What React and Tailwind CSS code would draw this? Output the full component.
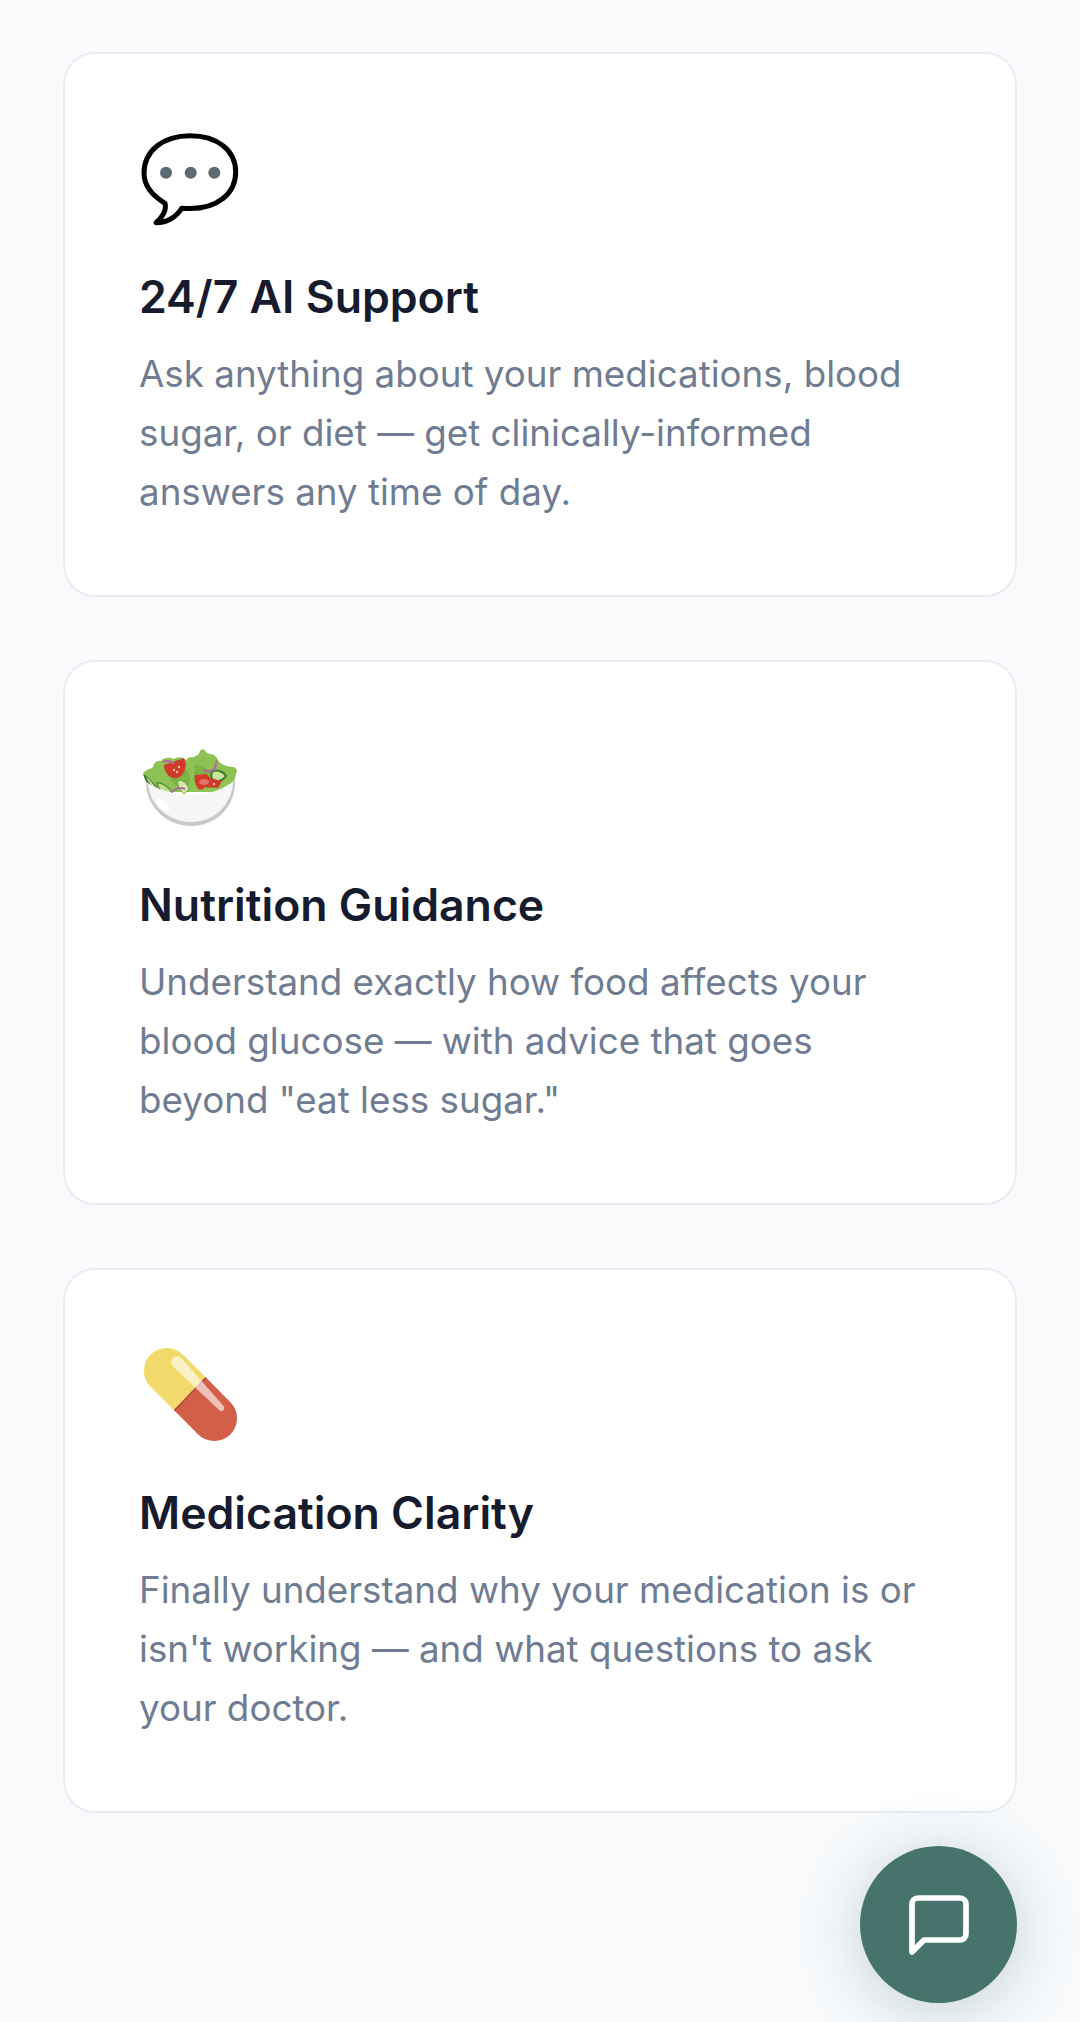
const ChatEmoji = () => (
  <svg width="104" height="104" viewBox="0 0 104 104" className="block">
    <path d="M51 7.7C25 7.7 5 22 5 45.3 5 58 14 68 26 75.3 28 82 23 90 17 94.7 28 94.5 37 89 42.7 80.3 45 80.5 48 80.5 51 80.5 78 80.5 96.7 66 96.7 44 96.7 22 78 7.7 51 7.7Z" fill="#fff" stroke="#000" strokeWidth="5" strokeLinejoin="round" />
    <circle cx="27" cy="44.7" r="6" fill="#5f6b73" />
    <circle cx="51.7" cy="44.7" r="6" fill="#5f6b73" />
    <circle cx="75.3" cy="44.7" r="6" fill="#5f6b73" />
  </svg>
);

const SaladEmoji = () => (
  <svg width="104" height="104" viewBox="0 0 104 104" className="block">
    <path d="M4 37C8 33 12 33 14 31 15 26 19 24 22 25 25 21 31 21 35 23 39 20 44 21 47 24 50 20 53 22 55 21 58 19 60 19 61 15 63 12 66 13 67 16 70 19 73 17 76 20 79 22 79 26 83 28 87 30 90 31 94 31 96 31 98 33 98 35L92 56H14Z" fill="#8fc255" />
    <path d="M30 30C36 28 46 30 50 38 54 46 50 52 44 52 36 52 28 42 30 30ZM56 28C64 30 74 34 74 44 70 52 60 50 54 44Z" fill="#7cb347" />
    <path d="M4 38C10 41 16 48 21 56L15 58C10 52 6 45 4 38Z" fill="#3f7d2e" />
    <path d="M7 41C11 44 15 49 18 54 13 50 9 46 7 41Z" fill="#cfe3a1" />
    <path d="M18 47C23 46 30 51 34 58L26 59C22 56 19 52 18 47Z" fill="#c3dd95" stroke="#4f8f33" strokeWidth="1.5" />
    <path d="M39 45C43 43 48 47 50 53L45 58C41 54 38 50 39 45Z" fill="#d6e8ae" stroke="#6ea83e" strokeWidth="1" />
    <path d="M73 36C77 33 84 35 87 40 84 45 78 46 74 44 72 42 72 38 73 36Z" fill="#cfe3a1" stroke="#3f7d2e" strokeWidth="2" />
    <path d="M25 29L45 22C48 28 47 35 42 40 37 44 31 42 28 38 26 35 25 32 25 29Z" fill="#cf3a2b" />
    <path d="M56 39L68 38C69 42 75 43 83 45L79 52C74 51 70 52 66 51 63 55 59 54 58 51 56 47 55 43 56 39Z" fill="#cf3a2b" />
    <circle cx="35" cy="34" r="1.2" fill="#f2c9a0" />
    <circle cx="40" cy="31" r="1.2" fill="#f2c9a0" />
    <circle cx="38" cy="36" r="1.2" fill="#f2c9a0" />
    <ellipse cx="65" cy="46" rx="5" ry="3" fill="#e57368" />
    <circle cx="75" cy="48" r="1.2" fill="#f2c9a0" />
    <path d="M24 26C28 24 32 25 35 28" stroke="#b06a9c" strokeWidth="2" fill="none" />
    <path d="M33 56C36 52 42 51 46 53" stroke="#b06a9c" strokeWidth="2" fill="none" />
    <path d="M64 34C71 38 78 33 77 25" stroke="#b06a9c" strokeWidth="2.2" fill="none" />
    <path d="M7 46C20 54 36 59 52 59 68 59 84 54 96 44 97 70 78 89 52 89 27 89 7 70 7 46Z" fill="#f6f6f6" />
    <path d="M7 46C7 70 27 90 52 90 78 90 97 70 96 44L94 46C93 68 76 86 52 86 29 86 10 68 9 47Z" fill="#c9c9c9" />
    <ellipse cx="24" cy="69" rx="8" ry="4" transform="rotate(35 24 69)" fill="#fff" />
  </svg>
);

const PillEmoji = () => (
  <svg width="104" height="104" viewBox="0 0 104 104" className="block">
    <path d="M11.6 10.6A22.7 22.7 0 0 1 43.8 10.6L67 33.4 35.4 66.4 11.6 42.8A22.7 22.7 0 0 1 11.6 10.6Z" fill="#f2d96b" />
    <path d="M67 33.4L91.4 58.2A22.7 22.7 0 0 1 59.2 90.4L35.4 66.4Z" fill="#d35f49" />
    <path d="M67 33.4L35.4 66.4" stroke="#a9473a" strokeWidth="1.5" />
    <path d="M41.9 13.5L84.8 62.2A3 3 0 0 1 80.6 66.4L33.5 21.9A6 6 0 0 1 41.9 13.5Z" fill="#fff" fillOpacity="0.62" />
  </svg>
);

const cards = [
  { icon: <ChatEmoji />, title: "24/7 AI Support", lines: ["Ask anything about your medications, blood", "sugar, or diet — get clinically-informed", "answers any time of day."] },
  { icon: <SaladEmoji />, title: "Nutrition Guidance", lines: ["Understand exactly how food affects your", "blood glucose — with advice that goes", "beyond \"eat less sugar.\""] },
  { icon: <PillEmoji />, title: "Medication Clarity", lines: ["Finally understand why your medication is or", "isn't working — and what questions to ask", "your doctor."] },
];

export default function App() {
  return (
    <div className="relative h-[2022px] overflow-hidden bg-[#f8fafc] px-[63px] pt-[52px] font-['Inter',sans-serif]">
      <div className="flex flex-col gap-[63px]">
        {cards.map((c) => (
          <div key={c.title} className="h-[545px] rounded-[32px] border-2 border-[#e8ebf2] bg-white px-[74px] pt-[74px]">
            <div className="h-[104px]">{c.icon}</div>
            <h3 className="mt-[36px] text-[44.6px] leading-[58px] font-semibold text-[#161b2e]">{c.title}</h3>
            <p className="mt-[19px] text-[36.75px] leading-[58.8px] text-[#6f7c91]">
              {c.lines.map((l) => (
                <span key={l} className="block whitespace-nowrap">{l}</span>
              ))}
            </p>
          </div>
        ))}
      </div>
      <button className="absolute left-[860px] top-[1846px] flex h-[157px] w-[157px] items-center justify-center rounded-full bg-[#47736d] shadow-[0_8px_64px_rgba(71,115,109,0.3)]">
        <svg width="72" height="72" viewBox="0 0 24 24" fill="none" stroke="#fff" strokeWidth="1.9" strokeLinecap="round" strokeLinejoin="round">
          <path d="M21 15a2 2 0 0 1-2 2H7l-4 4V5a2 2 0 0 1 2-2h14a2 2 0 0 1 2 2z" />
        </svg>
      </button>
    </div>
  );
}
